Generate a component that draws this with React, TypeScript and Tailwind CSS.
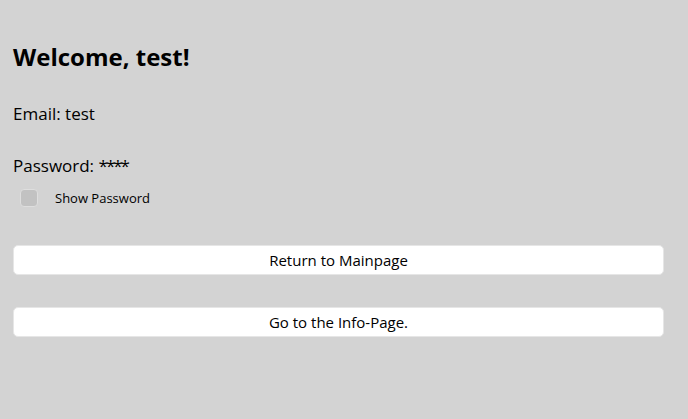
export default function App() {
  return (
    <div
      className="w-[688px] h-[419px] bg-[#d3d3d3] text-black pl-[13px] pr-[24px] pt-[43px] flex flex-col"
      style={{ fontFamily: '"Open Sans", "Noto Sans", sans-serif' }}
    >
      <h1 className="h-[28px] leading-[28px] text-[24px] font-bold">Welcome, test!</h1>
      <div className="mt-[31px] h-[24px] leading-[24px] text-[17px]">Email: test</div>
      <div className="mt-[28px] h-[24px] leading-[24px] text-[17px]">
        Password: <span className="tracking-[-2px]">****</span>
      </div>
      <div className="mt-[11px] h-[18px] flex items-center">
        <div className="ml-[7px] w-[18px] h-[18px] rounded-[4px] bg-[#c2c2c2] border border-[#dedede]" />
        <span className="ml-[17px] text-[13px] leading-[18px]">Show Password</span>
      </div>
      <button className="mt-[38px] h-[30px] w-full bg-white rounded-[5px] border border-[#e6e6e6] text-[15px] leading-[28px] text-black">
        Return to Mainpage
      </button>
      <button className="mt-[32px] h-[30px] w-full bg-white rounded-[5px] border border-[#e6e6e6] text-[15px] leading-[28px] text-black">
        Go to the Info-Page.
      </button>
    </div>
  );
}
